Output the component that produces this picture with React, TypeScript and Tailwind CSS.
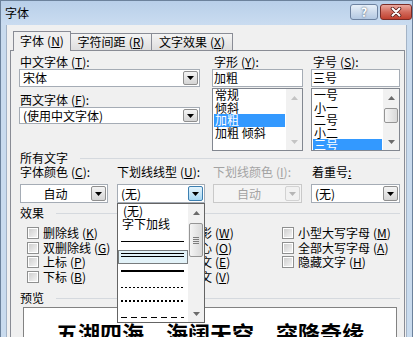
import clsx from 'clsx'

type ComboState = 'normal' | 'hover' | 'disabled'

function Key({ k }: { k: string }) {
  return (
    <span className="ml-[3px]">
      (<span className="underline">{k}</span>)
    </span>
  )
}

function Tri({ up = false, color }: { up?: boolean; color: string }) {
  return (
    <svg width="7" height="4" viewBox="0 0 7 4">
      <path d={up ? 'M0 4H7L3.5 0Z' : 'M0 0H7L3.5 4Z'} fill={color} />
    </svg>
  )
}

function Combo({
  text,
  className,
  center = false,
  state = 'normal',
}: {
  text: string
  className: string
  center?: boolean
  state?: ComboState
}) {
  const disabled = state === 'disabled'
  return (
    <div
      className={clsx(
        'flex border',
        disabled ? 'border-[#c9c9c9] bg-[#f4f4f4] text-[#a3a3a3]' : 'border-[#a5acb5] bg-white',
        className
      )}
    >
      <div className={clsx('flex-1 min-w-0 flex items-center whitespace-nowrap', center ? 'justify-center' : 'pl-[3px]')}>
        {text}
      </div>
      <div
        className={clsx(
          'w-[15px] m-[1px] flex items-center justify-center border rounded-[2px]',
          state === 'hover' && 'border-[#3c7fb1] bg-gradient-to-b from-[#e5f4fc] to-[#a7d8f4]',
          state === 'normal' && 'border-[#8f8f8f] bg-gradient-to-b from-[#f4f4f4] to-[#d5d5d5]',
          disabled && 'border-[#d2d2d2] bg-[#f1f1f1]'
        )}
      >
        <Tri color={disabled ? '#b5b5b5' : '#000'} />
      </div>
    </div>
  )
}

function Scroll({ arrow, thumb }: { arrow: string; thumb?: string }) {
  return (
    <div className="w-[16px] shrink-0 flex flex-col bg-[#f1f1f1]">
      <div className="h-[17px] flex items-center justify-center">
        <Tri up color={arrow} />
      </div>
      <div className="flex-1">
        {thumb && (
          <div
            className={clsx(
              'mx-[1px] rounded-[2px] border border-[#959595] bg-gradient-to-r from-[#f5f5f5] to-[#d9d9d9] flex flex-col items-center justify-center gap-[1px]',
              thumb
            )}
          >
            {thumb.includes('h-[34px]') && (
              <>
                <div className="w-[6px] h-px bg-[#7d7d7d]" />
                <div className="w-[6px] h-px bg-[#7d7d7d]" />
                <div className="w-[6px] h-px bg-[#7d7d7d]" />
                <div className="w-[6px] h-px bg-[#7d7d7d]" />
              </>
            )}
          </div>
        )}
      </div>
      <div className="h-[17px] flex items-center justify-center">
        <Tri color={arrow} />
      </div>
    </div>
  )
}

function ListBox({ items, sel, arrow, thumb }: { items: string[]; sel: number; arrow: string; thumb?: string }) {
  return (
    <div className="mt-[1px] h-[63px] border border-[#828790] bg-white flex">
      <div className="flex-1 min-w-0 overflow-hidden px-[1px]">
        {items.map((t, i) => (
          <div
            key={t}
            className={clsx('h-[12.5px] leading-[12.5px] pl-[1px] whitespace-nowrap', i === sel && 'bg-[#3399ff] text-white')}
          >
            {t}
          </div>
        ))}
      </div>
      <Scroll arrow={arrow} thumb={thumb} />
    </div>
  )
}

function GroupLine({ label }: { label: string }) {
  return (
    <div className="w-[381px] h-[14px] flex items-center">
      <span className="pl-[1px] whitespace-nowrap">{label}</span>
      <div className="flex-1 h-px ml-[12px] bg-[#d5d9de]" />
    </div>
  )
}

function Check({ label, k }: { label: string; k: string }) {
  return (
    <div className="h-[14.5px] flex items-center whitespace-nowrap">
      <div className="w-[12px] h-[12px] shrink-0 border border-[#8e8f8f] bg-white">
        <div className="m-[1px] h-[8px] bg-gradient-to-br from-[#cfcfcf] to-[#f3f3f3]" />
      </div>
      <span className="ml-[4px]">
        {label}
        <Key k={k} />
      </span>
    </div>
  )
}

const colA = [['删除线', 'K'], ['双删除线', 'G'], ['上标', 'P'], ['下标', 'B']]
const colB = [['阴影', 'W'], ['空心', 'O'], ['阳文', 'E'], ['阴文', 'V']]
const colC = [['小型大写字母', 'M'], ['全部大写字母', 'A'], ['隐藏文字', 'H']]

function UnderlineList() {
  return (
    <div className="absolute left-0 top-full z-10 w-[88px] h-[120px] border border-[#646464] bg-white flex">
      <div className="w-[70px] shrink-0">
        <div className="h-[13px] leading-[13px] pl-[5px]">(无)</div>
        <div className="h-[14px] leading-[14px] pl-[4px]">字下加线</div>
        <svg width="70" height="91" viewBox="0 0 70 91" className="block">
          <line x1="3" y1="10.5" x2="66" y2="10.5" stroke="#000" strokeWidth="1" />
          <rect x="0.5" y="19.5" width="69" height="13" fill="#e2f2f8" stroke="#000" strokeWidth="1" strokeDasharray="1 1" />
          <line x1="3" y1="22.5" x2="66" y2="22.5" stroke="#000" strokeWidth="1" />
          <line x1="3" y1="25.5" x2="66" y2="25.5" stroke="#000" strokeWidth="1" />
          <line x1="3" y1="40" x2="66" y2="40" stroke="#000" strokeWidth="2" />
          <line x1="3" y1="56.5" x2="66" y2="56.5" stroke="#000" strokeWidth="1" strokeDasharray="2 2" />
          <line x1="3" y1="70" x2="66" y2="70" stroke="#000" strokeWidth="2" strokeDasharray="2 2" />
          <line x1="3" y1="86.5" x2="66" y2="86.5" stroke="#000" strokeWidth="1" strokeDasharray="6 4" />
        </svg>
      </div>
      <Scroll arrow="#6b6b6b" thumb="mt-[2px] h-[34px]" />
    </div>
  )
}

export default function App() {
  return (
    <div className="w-[413px] h-[337px] overflow-hidden flex flex-col font-['Noto_Sans_CJK_SC',sans-serif] text-[12px] leading-[14px] text-black select-none">
      {/* title bar */}
      <div className="h-[25px] shrink-0 flex items-start border-t border-l border-r border-[#6c829c] bg-gradient-to-b from-[#b8cfe9] to-[#cadcf0]">
        <span className="ml-[4px] mt-[5px]">字体</span>
        <div className="ml-auto mt-[3px] flex gap-[2px]">
          <div className="w-[28px] h-[16px] rounded-[3px] border border-[#6d82a0] bg-gradient-to-b from-[#e8f0f9] via-[#cddbec] to-[#b3c8e2] flex items-center justify-center text-[12px] leading-none font-bold text-white [text-shadow:0_0_2px_#2c3e55]">
            ?
          </div>
          <div className="w-[32px] h-[16px] rounded-[3px] border border-[#7a2c26] bg-gradient-to-b from-[#eaa99f] via-[#d26a5c] to-[#c0402f] flex items-center justify-center">
            <svg width="12" height="10" viewBox="0 0 12 10">
              <path d="M2.5 1.5L9.5 8.5M9.5 1.5L2.5 8.5" stroke="#5a1f1a" strokeWidth="3.6" strokeLinecap="round" />
              <path d="M2.5 1.5L9.5 8.5M9.5 1.5L2.5 8.5" stroke="#fff" strokeWidth="2" strokeLinecap="round" />
            </svg>
          </div>
        </div>
      </div>

      <div className="flex-1 min-h-0 flex">
        <div className="w-[6px] shrink-0 border-l border-[#6c829c] bg-[#c9dbee]" />
        <div className="flex-1 min-w-0 border-l border-r border-[#a3b3c6] bg-[#f0f0f0] pt-[6px] pl-[3px] pr-[1px]">
          {/* tabs */}
          <div className="h-[20px] -mb-[1px] pl-[3px] flex items-end relative z-10">
            <div className="w-[58px] h-[20px] border border-b-0 border-[#898c95] bg-[#f0f0f0] flex items-center justify-center whitespace-nowrap pb-[1px]">
              字体<Key k="N" />
            </div>
            <div className="w-[81px] h-[17px] mb-[1px] border border-l-0 border-b-0 border-[#898c95] bg-gradient-to-b from-[#f4f4f4] to-[#dedede] flex items-center justify-center whitespace-nowrap">
              字符间距<Key k="R" />
            </div>
            <div className="w-[81px] h-[17px] mb-[1px] border border-l-0 border-b-0 border-[#898c95] bg-gradient-to-b from-[#f4f4f4] to-[#dedede] flex items-center justify-center whitespace-nowrap">
              文字效果<Key k="X" />
            </div>
          </div>

          {/* panel */}
          <div className="h-[300px] border border-[#898c95] bg-[#f0f0f0] pl-[8px] pt-[4px]">
            <div className="flex">
              <div className="w-[181px]">
                <div className="h-[14px] pl-[1px] whitespace-nowrap">
                  中文字体<Key k="T" />:
                </div>
                <Combo text="宋体" className="h-[18px]" />
                <div className="h-[14px] mt-[6px] pl-[1px] whitespace-nowrap">
                  西文字体<Key k="F" />:
                </div>
                <Combo text="(使用中文字体)" className="h-[17px]" />
              </div>
              <div className="w-[91px] ml-[12px]">
                <div className="h-[14px] pl-[2px] whitespace-nowrap">
                  字形<Key k="Y" />:
                </div>
                <div className="h-[18px] border border-[#a5acb5] bg-white pl-[1px] flex items-center">加粗</div>
                <ListBox items={['常规', '倾斜', '加粗', '加粗 倾斜']} sel={2} arrow="#c4c4c4" />
              </div>
              <div className="w-[89px] ml-[8px]">
                <div className="h-[14px] pl-[2px] whitespace-nowrap">
                  字号<Key k="S" />:
                </div>
                <div className="h-[18px] border border-[#a5acb5] bg-white pl-[1px] flex items-center">三号</div>
                <ListBox items={['一号', '小一', '二号', '小二', '三号']} sel={4} arrow="#6b6b6b" thumb="mt-[2px] h-[15px]" />
              </div>
            </div>

            <GroupLine label="所有文字" />
            <div className="flex h-[14px] whitespace-nowrap">
              <div className="w-[88px] ml-[1px]">
                字体颜色<Key k="C" />:
              </div>
              <div className="w-[88px] ml-[9px]">
                下划线线型<Key k="U" />:
              </div>
              <div className="w-[89px] ml-[8px] text-[#a3a3a3]">
                下划线颜色<Key k="I" />:
              </div>
              <div className="w-[89px] ml-[9px] pl-[1px]">
                着重号<span className="underline">:</span>
              </div>
            </div>
            <div className="flex mt-[5px]">
              <Combo text="自动" center className="w-[88px] h-[19px] ml-[1px]" />
              <div className="relative w-[88px] ml-[9px]">
                <Combo text="(无)" state="hover" className="h-[19px]" />
                <UnderlineList />
              </div>
              <Combo text="自动" center state="disabled" className="w-[89px] h-[19px] ml-[8px]" />
              <Combo text="(无)" className="w-[89px] h-[19px] ml-[9px]" />
            </div>

            <div className="mt-[3px]">
              <GroupLine label="效果" />
            </div>
            <div className="flex mt-[6px]">
              <div className="w-[153px] pl-[8px]">
                {colA.map(([l, k]) => (
                  <Check key={l} label={l} k={k} />
                ))}
              </div>
              <div className="w-[110px]">
                {colB.map(([l, k]) => (
                  <Check key={l} label={l} k={k} />
                ))}
              </div>
              <div>
                {colC.map(([l, k]) => (
                  <Check key={l} label={l} k={k} />
                ))}
              </div>
            </div>

            <div className="mt-[7px]">
              <GroupLine label="预览" />
            </div>
            <div className="mt-[2px] ml-[4px] w-[374px] h-[60px] border border-[#828282] bg-white pt-[13px] text-center text-[22px] leading-[22px] font-bold whitespace-nowrap">
              五湖四海，海阔天空，突降奇缘
            </div>
          </div>
        </div>
        <div className="w-[6px] shrink-0 border-r border-[#6c829c] bg-[#c9dbee]" />
      </div>
    </div>
  )
}
